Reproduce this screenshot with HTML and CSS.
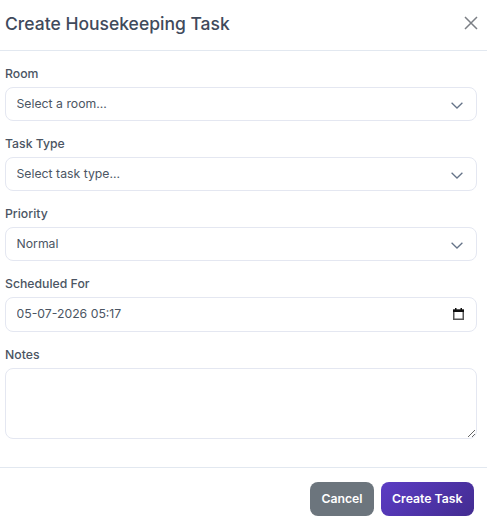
FILE: index.html
```html
<!DOCTYPE html>
<html lang="en-IN">
<head>
  <meta charset="UTF-8" />
  <meta name="viewport" content="width=device-width, initial-scale=1.0"/>
  <title>Create Housekeeping Task</title>
  <link rel="stylesheet" href="styles.css">
</head>
<body>
  <div class="modal">
    <div class="modal-header">
      <h3>Create Housekeeping Task</h3>
      <button class="close-btn" type="button" aria-label="Close">
        <svg width="14" height="14" viewBox="0 0 14 14"><path d="M1 1l12 12M13 1L1 13" stroke="#7b7f85" stroke-width="1.5" fill="none"/></svg>
      </button>
    </div>

    <form class="modal-body">
      <div class="field">
        <label for="room">Room</label>
        <select id="room"><option>Select a room...</option></select>
      </div>
      <div class="field">
        <label for="taskType">Task Type</label>
        <select id="taskType"><option>Select task type...</option></select>
      </div>
      <div class="field">
        <label for="priority">Priority</label>
        <select id="priority"><option>Normal</option></select>
      </div>
      <div class="field">
        <label for="scheduled">Scheduled For</label>
        <div class="date-wrap">
          <input id="scheduled" class="tall" type="text" value="05-07-2026 05:17" />
          <svg class="date-icon" width="11" height="12" viewBox="0 0 11 12"><path d="M0 1.5h11V12H0zM1.5 4v6.5h8V4z" fill="#555" fill-rule="evenodd"/><path d="M0 1.5h11V4H0zM2 0h1.5v2H2zM7.5 0H9v2H7.5z" fill="#111"/></svg>
        </div>
      </div>
      <div class="field">
        <label for="notes">Notes</label>
        <textarea id="notes"></textarea>
      </div>
    </form>

    <div class="modal-footer">
      <button class="btn btn-cancel" type="button">Cancel</button>
      <button class="btn btn-create" type="button">Create Task</button>
    </div>
  </div>
</body>
</html>
```

FILE: styles.css
```css
* {
  margin: 0;
  padding: 0;
  box-sizing: border-box;
  font-family: Inter, "Noto Sans", sans-serif;
}

body {
  background: #fff;
  color: #4b5563;
}

.modal {
  width: 487px;
}

.modal-header {
  height: 51px;
  padding: 0 9px 4px 5px;
  display: flex;
  align-items: center;
  justify-content: space-between;
  border-bottom: 1px solid #e2e8f0;
}

.modal-header h3 {
  font-size: 17.5px;
  font-weight: 500;
  color: #3f4a5c;
}

.close-btn {
  width: 14px;
  height: 14px;
  border: none;
  background: none;
  display: flex;
}

.modal-body {
  padding: 15px 10px 28px 5px;
  display: flex;
  flex-direction: column;
  gap: 15px;
}

.field label {
  display: block;
  font-size: 12.25px;
  line-height: 15px;
  font-weight: 500;
  margin-bottom: 6px;
}

select,
input,
textarea {
  display: block;
  width: 100%;
  height: 34px;
  padding: 0 10.5px;
  font-size: 12.25px;
  color: #4b5563;
  background: #fff;
  border: 1px solid #e4e7f1;
  border-radius: 8px;
  outline: none;
}

select {
  appearance: none;
  padding-bottom: 2px;
  background-image: url("data:image/svg+xml,%3Csvg xmlns='http://www.w3.org/2000/svg' width='12' height='7' viewBox='0 0 12 7'%3E%3Cpath d='M.6.8 6 6 11.4.8' stroke='%23667489' stroke-width='1.3' fill='none'/%3E%3C/svg%3E");
  background-repeat: no-repeat;
  background-position: right 13px top 14px;
}

.tall {
  height: 35px;
  padding-bottom: 2px;
}

.date-wrap {
  position: relative;
}

.date-icon {
  position: absolute;
  top: 11px;
  right: 13px;
}

textarea {
  height: 71px;
  padding: 8px 10.5px;
}

.modal-footer {
  border-top: 1px solid #e2e8f0;
  padding: 14px 13px 7px 0;
  display: flex;
  justify-content: flex-end;
  gap: 7px;
}

.btn {
  height: 34px;
  padding-bottom: 2px;
  border: none;
  border-radius: 8px;
  color: #fff;
  font-size: 12.25px;
  font-weight: 600;
}

.btn-cancel {
  padding-left: 11px;
  padding-right: 11px;
  background: #6c757d;
}

.btn-create {
  padding-left: 11.5px;
  padding-right: 11.5px;
  background: linear-gradient(135deg, #5b3cc4 0%, #432c91 100%);
}
```
